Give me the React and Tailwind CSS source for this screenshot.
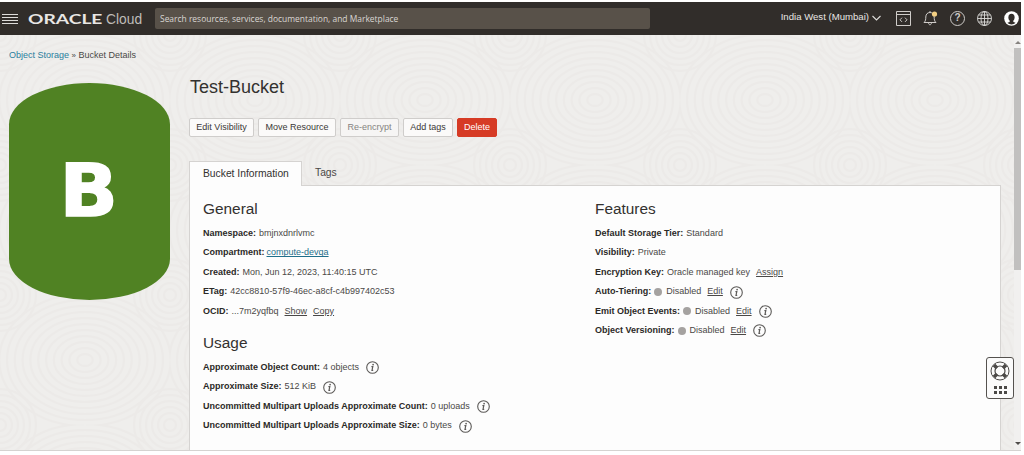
import clsx from "clsx";

const general = [
  { label: "Namespace:", value: "bmjnxdnrlvmc" },
  { label: "Compartment:", link: "compute-devqa" },
  { label: "Created:", value: "Mon, Jun 12, 2023, 11:40:15 UTC" },
  { label: "ETag:", value: "42cc8810-57f9-46ec-a8cf-c4b997402c53" },
  { label: "OCID:", value: "...7m2yqfbq", actions: ["Show", "Copy"] },
];

const usage = [
  { label: "Approximate Object Count:", value: "4 objects", info: true },
  { label: "Approximate Size:", value: "512 KiB", info: true },
  { label: "Uncommitted Multipart Uploads Approximate Count:", value: "0 uploads", info: true },
  { label: "Uncommitted Multipart Uploads Approximate Size:", value: "0 bytes", info: true },
];

const features = [
  { label: "Default Storage Tier:", value: "Standard" },
  { label: "Visibility:", value: "Private" },
  { label: "Encryption Key:", value: "Oracle managed key", actions: ["Assign"] },
  { label: "Auto-Tiering:", value: "Disabled", dot: true, actions: ["Edit"], info: true },
  { label: "Emit Object Events:", value: "Disabled", dot: true, actions: ["Edit"], info: true },
  { label: "Object Versioning:", value: "Disabled", dot: true, actions: ["Edit"], info: true },
];

const rings = [6, 12, 18, 24, 30, 36, 42, 48, 54, 60, 66];

const Texture = () => (
  <svg className="absolute inset-0 h-full w-full" fill="none" stroke="#eceae8" strokeWidth="2">
    <defs>
      <pattern id="rings" width="170" height="130" patternUnits="userSpaceOnUse">
        <rect width="170" height="130" fill="#efeeec" stroke="none" />
        {rings.map((r) => (
          <ellipse key={r} cx="85" cy="65" rx={r * 1.3} ry={r} />
        ))}
        {rings.slice(0, 6).map((r) => (
          <g key={r}>
            <circle cx="0" cy="0" r={r} />
            <circle cx="170" cy="0" r={r} />
            <circle cx="0" cy="130" r={r} />
            <circle cx="170" cy="130" r={r} />
          </g>
        ))}
      </pattern>
    </defs>
    <rect width="100%" height="100%" fill="url(#rings)" stroke="none" />
  </svg>
);

const InfoIcon = () => (
  <svg className="ml-[7px] h-[13px] w-[13px] shrink-0" viewBox="0 0 13 13" fill="none" stroke="#5c5a58">
    <circle cx="6.5" cy="6.5" r="5.8" strokeWidth="1.1" />
    <path d="M5.4 5.6h1.4l-.8 3.7h1.2" strokeWidth="1.2" />
    <circle cx="7.1" cy="3.6" r=".85" fill="#5c5a58" stroke="none" />
  </svg>
);

const Row = ({ label, value, link, actions = [], dot, info }) => (
  <div className="flex h-[19.45px] items-center whitespace-nowrap text-[9px] text-[#4a4846]">
    <span className="font-bold text-[#2b2927]">{label}</span>
    {dot && <span className="ml-[3px] mr-px h-2 w-2 rounded-full bg-[#a5a2a0]" />}
    {value && <span className="ml-[3px]">{value}</span>}
    {link && <a className="ml-[2px] text-[#1f6f8b] underline">{link}</a>}
    {actions.map((action) => (
      <a key={action} className="ml-1.5 underline">{action}</a>
    ))}
    {info && <InfoIcon />}
  </div>
);

const Section = ({ title, rows, className }) => (
  <section className={className}>
    <h2 className="h-[24px] text-[15.4px] leading-[18px] text-[#33312f]">{title}</h2>
    {rows.map((row) => (
      <Row key={row.label} {...row} />
    ))}
  </section>
);

const Button = ({ children, className }) => (
  <button
    className={clsx(
      "flex h-[19px] items-center justify-center rounded-[2px] border text-[9px] whitespace-nowrap",
      className
    )}
  >
    {children}
  </button>
);

const Header = () => (
  <header className="flex h-[33px] w-[1021px] items-center bg-[#312d2a] text-[#e8e6e4]">
    <svg className="ml-0.5 h-3 w-4" viewBox="0 0 16 12" stroke="#dedcda" strokeWidth="1.2">
      <path d="M0 1.5h16M0 4.5h16M0 7.5h16M0 10.5h16" />
    </svg>
    <div className="ml-[10px] flex h-5 w-[127px] items-center leading-5">
      <span className="w-[78px] shrink-0">
        <span className="inline-block origin-left scale-x-[1.42] font-['Lato'] text-[13.5px] font-bold">ORACLE</span>
      </span>
      <span className="inline-block origin-left scale-x-[.92] text-[15px] text-[#bfbcb9]">Cloud</span>
    </div>
    <div className="flex h-[21px] w-[495px] items-center rounded-[2px] bg-[#585149] pl-[5px] font-['Open_Sans'] text-[9px] text-[#d9d6d3]">
      <span className="origin-left scale-x-[.938]">Search resources, services, documentation, and Marketplace</span>
    </div>
    <div className="ml-auto flex items-center">
      <span className="pb-0.5 text-[9.6px] whitespace-nowrap">India West (Mumbai)</span>
      <svg className="ml-[3px] h-[6px] w-[9px]" viewBox="0 0 9 6" fill="none" stroke="#dedcda" strokeWidth="1.1">
        <path d="M.5 1l4 4 4-4" />
      </svg>
      <svg className="ml-[15px] h-[15px] w-[15px]" viewBox="0 0 15 15" fill="none" stroke="#cfccc9">
        <path d="M.5.5h14v14H.5zM.5 3.5h14M6 6.7L4 8.8l2 2.1M9 6.7l2 2.1-2 2.1" />
      </svg>
      <svg className="ml-3 h-4 w-[15px]" viewBox="0 0 15 16" fill="none" stroke="#cfccc9">
        <path d="M7 1v1.5M1 12.5h12c-1.6-1.5-1.8-3-1.8-5.5C11.2 4.2 9.5 2.5 7 2.5S2.8 4.2 2.8 7c0 2.5-.2 4-1.8 5.5zM5.5 12.500c0 3 3 3 3 0" />
        <circle cx="11.5" cy="4" r="2.6" fill="#f3cf83" stroke="none" />
      </svg>
      <div className="ml-3 flex h-[15px] w-[15px] items-center justify-center rounded-full border border-[#cfccc9] text-[10px] leading-none font-bold text-[#cfccc9]">
        ?
      </div>
      <svg className="ml-3 h-[15px] w-[15px]" viewBox="0 0 15 15" fill="none" stroke="#dedcda" strokeWidth=".9">
        <circle cx="7.5" cy="7.5" r="7" />
        <ellipse cx="7.5" cy="7.5" rx="3.5" ry="7" />
        <path d="M7.5.5v14M.5 7.5h14M1.5 4h12M1.5 11h12" />
      </svg>
      <svg className="mr-[2px] ml-3 h-[15px] w-[15px]" viewBox="0 0 15 15">
        <circle cx="7.5" cy="7.5" r="7.3" fill="#fff" />
        <ellipse cx="7.5" cy="6.5" rx="3.1" ry="3.7" fill="#312d2a" />
        <path d="M6 9.5h3l.5 1.5 2 .8C9.5 14 5.5 14 3.5 11.8l2-.8z" fill="#312d2a" />
      </svg>
    </div>
  </header>
);

const SupportWidget = () => (
  <div className="absolute top-[322px] left-[986px] flex h-[42px] w-[28px] flex-col items-center rounded-[3px] border border-[#55524f] bg-[#fbfbfb] pt-[3px]">
    <svg className="h-5 w-5" viewBox="0 0 20 20" fill="none" stroke="#4b4947">
      <circle cx="10" cy="10" r="9" />
      <circle cx="10" cy="10" r="5" strokeWidth="1.2" />
      <path d="M4 4l3 3M16 4l-3 3M4 16l3-3M16 16l-3-3" strokeWidth="3.6" />
    </svg>
    <div className="mt-[5px] grid grid-cols-3 gap-x-[2px] gap-y-[2px]">
      {[0, 1, 2, 3, 4, 5].map((i) => (
        <span key={i} className="h-[3px] w-[3px] bg-[#4b4947]" />
      ))}
    </div>
  </div>
);

const App = () => {
  return (
    <div className="h-[455px] w-[1024px] overflow-hidden bg-white pt-[2px] font-['Liberation_Sans',sans-serif]">
      <Header />
      <main className="relative h-[416px] w-[1021px] overflow-hidden border-b border-[#d5d3d1] bg-[#efeeec]">
        <Texture />
        <div className="relative flex h-full">
          <aside className="w-[189px] shrink-0 pt-[14px] pl-[9px]">
            <nav className="h-[33.5px] text-[9px] leading-3 whitespace-nowrap text-[#4a4846]">
              <a className="text-[#2a7f9e]">Object Storage</a>
              <span className="mx-[2.5px] text-[8px]">»</span>
              Bucket Details
            </nav>
            <div className="flex h-[217px] w-[161px] items-center justify-center rounded-[50%/19%] bg-[#508223] pr-px pb-px">
              <span className="scale-x-105 font-['DejaVu_Sans'] text-[73px] leading-none font-bold text-white [-webkit-text-stroke:1.5px_white]">
                B
              </span>
            </div>
          </aside>
          <div className="w-[812px] shrink-0 pt-[41px]">
            <h1 className="h-[42px] pl-px text-[18px] leading-[22px] text-[#33312f]">Test-Bucket</h1>
            <div className="flex gap-[4px] text-[#3a3836]">
              <Button className="w-[65px] border-[#cfcdcb] bg-[#fbfaf9]">Edit Visibility</Button>
              <Button className="w-[78px] border-[#cfcdcb] bg-[#fbfaf9]">Move Resource</Button>
              <Button className="w-[59px] border-[#cfcdcb] bg-[#f6f5f4] text-[#858381]">Re-encrypt</Button>
              <Button className="w-[50px] border-[#cfcdcb] bg-[#fbfaf9]">Add tags</Button>
              <Button className="w-[40px] border-[#d63b25] bg-[#d63b25] text-white">Delete</Button>
            </div>
            <div className="relative z-10 mt-6 flex h-[24px] text-[10.3px] leading-[24px] text-[#33312f]">
              <div className="h-[25px] w-[113px] border border-b-0 border-[#d5d3d1] bg-[#fdfdfd] pl-[13px]">Bucket Information</div>
              <div className="pl-[13px] text-[#4a4846]">Tags</div>
            </div>
            <div className="flex h-[280px] border border-[#d5d3d1] bg-[#fdfdfd] pt-[14px] pl-[13px]">
              <div className="w-[392px]">
                <Section title="General" rows={general} className="h-[134px]" />
                <Section title="Usage" rows={usage} />
              </div>
              <Section title="Features" rows={features} />
            </div>
          </div>
        </div>
        <div className="absolute top-0 right-0 flex h-full w-[7px] flex-col items-center bg-[#f1f0ef]">
          <svg className="mt-[5px] h-[5px] w-[6px]" viewBox="0 0 6 5">
            <path d="M0 4l3-3 3 3z" fill="#85827f" />
          </svg>
          <div className="mt-[3px] h-[222px] w-full bg-[#c1c0bf]" />
          <svg className="mt-auto mb-1 h-[5px] w-[6px]" viewBox="0 0 6 5">
            <path d="M0 1l3 3 3-3z" fill="#4f4c4a" />
          </svg>
        </div>
        <SupportWidget />
      </main>
    </div>
  );
};

export default App;
